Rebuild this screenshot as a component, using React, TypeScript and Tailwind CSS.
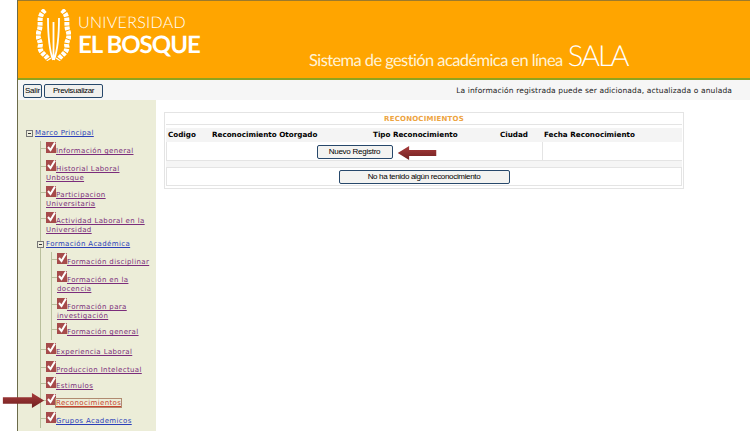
const mainItems = [
  { label: "Información general", color: "text-[#7b2d7b]", h: "h-[18px]" },
  { label: "Historial Laboral Unbosque", color: "text-[#7b2d7b]", h: "h-[26px]" },
  { label: "Participacion Universitaria", color: "text-[#7b2d7b]", h: "h-[26px]" },
  { label: "Actividad Laboral en la Universidad", color: "text-[#7b2d7b]", h: "h-[26px]" },
]

const formacion = [
  { label: "Formación disciplinar", h: "h-[18px]" },
  { label: "Formación en la docencia", h: "h-[27px]" },
  { label: "Formación para investigación", h: "h-[25px]" },
  { label: "Formación general", h: "h-[18px]" },
]

const bottomItems = [
  { label: "Experiencia Laboral", color: "text-[#7b2d7b]", h: "h-[18px]" },
  { label: "Produccion Intelectual", color: "text-[#7b2d7b]", h: "h-[16px]" },
  { label: "Estimulos", color: "text-[#7b2d7b]", h: "h-[17px]" },
  { label: "Reconocimientos", color: "text-[#c8452f]", h: "h-[18px]", active: true },
  { label: "Grupos Academicos", color: "text-[#2b3fb8]", h: "h-[17px]" },
]

function Check() {
  return (
    <svg width="10" height="12" viewBox="0 0 10 12" className="inline-block align-baseline">
      <rect x="0" y="1" width="10" height="11" fill="#a64b4b" />
      <path d="M2 6l2.5 3L9 1.5" fill="none" stroke="#ffffff" strokeWidth="2" />
    </svg>
  )
}

function Leaf({ label, color, h, active }: { label: string; color: string; h: string; active?: boolean }) {
  return (
    <li className={`relative ${h} pl-[5px] leading-[9px]`}>
      <span className="absolute left-0 top-[7px] w-[5px] border-t border-[#b9bf9c]" />
      <Check />
      <span className={`underline ${color} ${active ? "outline outline-1 outline-[#b08a70]" : ""}`}>{label}</span>
    </li>
  )
}

function Minus() {
  return (
    <span className="inline-flex items-center justify-center w-[7px] h-[7px] border border-[#777] bg-[#eeeedd] mr-[2px] shrink-0">
      <span className="w-[3px] border-t border-[#333]" />
    </span>
  )
}

function RedArrow({ className }: { className: string }) {
  return (
    <svg viewBox="0 0 44 16" className={className}>
      <defs>
        <linearGradient id="arrowFill" x1="0" y1="0" x2="0" y2="1">
          <stop offset="0" stopColor="#a83c3c" />
          <stop offset="1" stopColor="#6f1f1f" />
        </linearGradient>
      </defs>
      <path d="M44 8L31 0v4.5H0v7h31V16z" fill="url(#arrowFill)" />
    </svg>
  )
}

function Logo() {
  return (
    <svg width="35" height="52" viewBox="0 0 35 52" className="shrink-0">
      <g fill="none" stroke="#ffffff" strokeLinecap="butt">
        <path d="M9 1C1 8 6 14 3 22c-3 8 3 10 1 16 0 6 6 8 9 13" strokeWidth="5" strokeDasharray="3.5 1" />
        <path d="M26 1c8 7 3 13 6 21 3 8-3 10-1 16 0 6-6 8-9 13" strokeWidth="5" strokeDasharray="3.5 1" />
        <path d="M12 9c0 16 1 31 5 42M23 9c0 16-1 31-5 42M17.5 13v37" strokeWidth="1.8" />
      </g>
    </svg>
  )
}

export default function App() {
  return (
    <div className="w-[750px] h-[431px] overflow-hidden bg-white pl-[17px] font-['DejaVu_Sans',sans-serif] text-black relative [text-rendering:geometricPrecision]">
      <div className="h-full border-l border-[#6b6b4a]">
        {/* cabecera */}
        <header className="h-[80px] bg-[#ffa500] border-t border-[#9c7a2c] border-b-2 border-b-[#8ea31f] flex">
          <div className="flex pl-[18px] pt-[8px] gap-[7px] w-[270px]">
            <Logo />
            <div className="text-white font-['Lato',sans-serif]">
              <div className="text-[16px] leading-[18px] mt-[5px] font-light tracking-[0.3px]">UNIVERSIDAD</div>
              <div className="text-[24px] leading-[26px] font-bold tracking-[-1px]">EL BOSQUE</div>
            </div>
          </div>
          <div className="flex items-end pl-[21px] pb-[5px] text-[#fff3d6] font-['Lato',sans-serif] text-[16.5px] tracking-[-0.6px] leading-[26px] whitespace-nowrap">
            Sistema de gestión académica en línea
            <span className="text-[29px] leading-[34px] ml-[5px] font-light text-white tracking-[-2px]">SALA</span>
          </div>
        </header>

        {/* barra de acciones */}
        <div className="h-[20px] bg-[#f6f6f6] flex items-center pl-[5px] pr-[18px] pt-px">
          <button className="h-[14px] w-[19px] rounded-[2px] border border-[#27486b] bg-[#f0f0ee] text-[8px] tracking-[-0.2px] leading-none font-['Liberation_Sans',sans-serif]">Salir</button>
          <button className="h-[14px] w-[59px] ml-[2px] rounded-[2px] border border-[#27486b] bg-[#f0f0ee] text-[8px] tracking-[-0.35px] leading-none font-['Liberation_Sans',sans-serif]">Previsualizar</button>
          <span className="ml-auto text-[7.5px] tracking-[0.13px] text-[#222] whitespace-nowrap">La información registrada puede ser adicionada, actualizada o anulada</span>
        </div>

        <div className="flex h-[331px]">
          {/* menu lateral */}
          <aside className="w-[138px] shrink-0 bg-[#ecedd8] pt-[28px] pl-[8px] text-[7px] tracking-[0.37px]">
            <div className="flex items-center h-[10px] leading-[10px]">
              <Minus />
              <span className="underline text-[#2b3fb8]">Marco Principal</span>
            </div>
            <ul className="ml-[14px] mt-[3px] border-l border-[#b9bf9c] pr-[4px]">
              {mainItems.map((item) => <Leaf key={item.label} {...item} />)}
              <li className="relative h-[14px] leading-[10px] -ml-[4px] flex items-center">
                <Minus />
                <span className="underline text-[#2b3fb8]">Formación Académica</span>
              </li>
              <li>
                <ul className="ml-[10px] mt-[1px] mb-[2px] border-l border-[#b9bf9c]">
                  {formacion.map((item) => <Leaf key={item.label} color="text-[#7b2d7b]" {...item} />)}
                </ul>
              </li>
              {bottomItems.map((item) => <Leaf key={item.label} {...item} />)}
            </ul>
          </aside>

          {/* contenido */}
          <main className="pl-[8px] pt-[12px] text-[7.2px]">
            <div className="w-[520px] border border-[#e4e4e4] px-[1px] pt-px pb-[2px]">
              <div className="h-[11px] border-b border-[#e4e4e4] text-center font-bold text-[7px] text-[#eda43f] leading-[10px] tracking-[0.2px]">RECONOCIMIENTOS</div>
              <div className="h-[14px] mt-[3px] bg-[#f4f4f4] flex items-center font-bold leading-none pl-[2px]">
                <span className="w-[44px]">Codigo</span>
                <span className="w-[161px]">Reconocimiento Otorgado</span>
                <span className="w-[127px]">Tipo Reconocimiento</span>
                <span className="w-[44px]">Ciudad</span>
                <span>Fecha Reconocimiento</span>
              </div>
              <div className="h-[25px] bg-[#f5f5f5]">
                <div className="h-[19px] bg-white border-b border-[#e4e4e4]">
                  <div className="w-[377px] h-[19px] border-x border-[#e4e4e4] flex justify-center items-center">
                    <button className="h-[14px] w-[76px] rounded-[2px] border border-[#27486b] bg-[#f3f3f1] text-[8px] tracking-[-0.25px] leading-none font-['Liberation_Sans',sans-serif]">Nuevo Registro</button>
                  </div>
                </div>
              </div>
              <div className="h-[19px] bg-white border border-[#e4e4e4] flex justify-center items-center">
                <button className="h-[14px] w-[171px] rounded-[2px] border border-[#27486b] bg-[#f3f3f1] text-[8px] tracking-[-0.33px] leading-none font-['Liberation_Sans',sans-serif]">No ha tenido algún reconocimiento</button>
              </div>
            </div>
          </main>
        </div>
      </div>

      <RedArrow className="absolute left-[2px] top-[393px] w-[43px] h-[15px]" />
      <RedArrow className="absolute left-[396px] top-[146px] w-[42px] h-[14px] -scale-x-100" />
    </div>
  )
}
